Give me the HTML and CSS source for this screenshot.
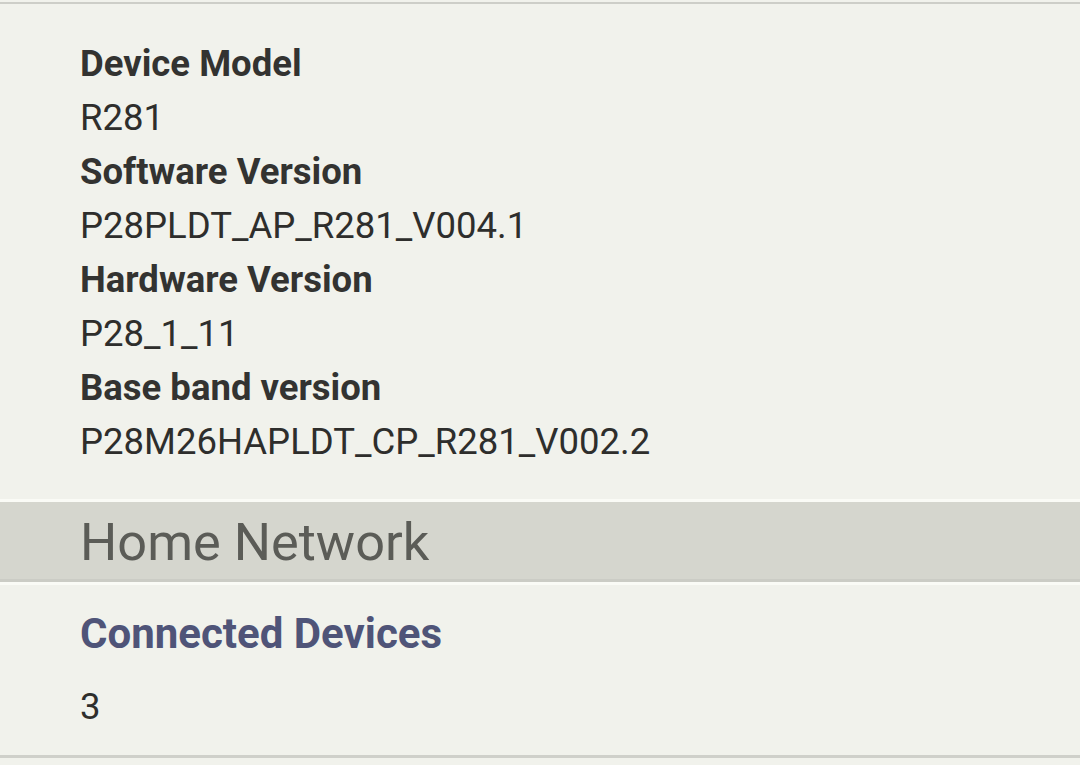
FILE: index.html
```html
<!DOCTYPE html>
<html>
<head>
<meta charset="utf-8">
<link rel="stylesheet" href="styles.css">
</head>
<body>
<div class="page">
  <div class="info">
    <div class="label">Device Model</div>
    <div class="value">R281</div>
    <div class="label">Software Version</div>
    <div class="value">P28PLDT_AP_R281_V004.1</div>
    <div class="label">Hardware Version</div>
    <div class="value">P28_1_11</div>
    <div class="label">Base band version</div>
    <div class="value">P28M26HAPLDT_CP_R281_V002.2</div>
  </div>
  <div class="band">Home Network</div>
  <div class="item">
    <div class="item-title">Connected Devices</div>
    <div class="item-value">3</div>
  </div>
</div>
</body>
</html>
```
FILE: styles.css
```css
html, body {
  margin: 0;
  padding: 0;
  background: #f1f2ec;
}
.page {
  width: 1080px;
  height: 765px;
  overflow: hidden;
  font-family: Roboto, "Liberation Sans", sans-serif;
  border-top: 2px solid #f1f2ec;
}
.info {
  border-top: 2px solid #cdcec8;
  padding: 33px 0 30px 80px;
}
.label {
  font-size: 36.5px;
  line-height: 54px;
  font-weight: 700;
  color: #333331;
}
.value {
  font-size: 36.5px;
  line-height: 54px;
  font-weight: 400;
  color: #2e2e2c;
}
.band {
  border-top: 3px solid #fafbf6;
  background: #d5d6ce;
  height: 80px;
  line-height: 80px;
  padding-left: 80px;
  font-size: 52.3px;
  color: #5b5c57;
  border-bottom: 3px solid #fafbf6;
  box-shadow: inset 0 -3px 0 #cbccc5;
}
.item {
  padding: 23px 0 0 80px;
  height: 147px;
  border-bottom: 3px solid #cfd0ca;
}
.item-title {
  font-size: 42px;
  line-height: 52px;
  font-weight: 700;
  color: #4f5478;
}
.item-value {
  margin-top: 25px;
  font-size: 36.5px;
  line-height: 44px;
  color: #2e2e2c;
}
```
